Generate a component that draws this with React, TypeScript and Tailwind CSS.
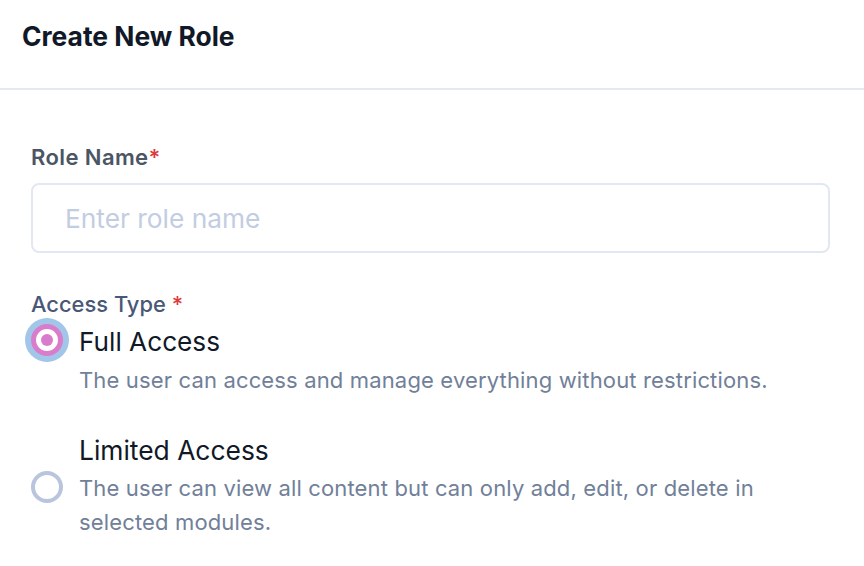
import React from "react";

export default function App() {
  return (
    <div className="w-[864px] h-[566px] bg-white overflow-hidden" style={{ fontFamily: "Inter, 'Noto Sans', sans-serif" }}>
      <div className="h-[90px] border-b-2 border-[#e3eaf3] px-[22px] pt-[20px]">
        <h1 className="text-[26.4px] leading-[32px] font-bold text-[#111827]">Create New Role</h1>
      </div>
      <div className="px-[31px] pr-[34px] pt-[53px]">
        <label className="block text-[22px] leading-[28px] font-semibold tracking-[0.4px] text-[#4b5563]">
          Role Name<span className="text-[#dc3c3c]">*</span>
        </label>
        <input
          className="mt-[12px] block w-full h-[70px] rounded-[8px] border-2 border-[#e1e8f4] px-[32px] text-[26.3px] text-[#111827] placeholder:text-[#c2cde2] outline-none"
          placeholder="Enter role name"
        />
        <div className="mt-[37px] text-[21.9px] leading-[28px] font-medium text-[#4a5878]">
          Access Type <span className="text-[#dc3c3c]">*</span>
        </div>
        <div className="mt-[8px] flex items-start">
          <div className="w-[32px] h-[32px] mt-[-2px] shrink-0 rounded-full border-[5px] border-[#d97ccb] ring-[6px] ring-[#a2c6ea] flex items-center justify-center bg-white">
            <div className="w-[12px] h-[12px] rounded-full bg-[#d97ccb]" />
          </div>
          <div className="ml-[16px]">
            <div className="text-[26.2px] leading-[32px] text-[#111827]">Full Access</div>
            <div className="mt-[5px] text-[22px] leading-[34px] tracking-[0.15px] text-[#718099]">
              The user can access and manage everything without restrictions.
            </div>
          </div>
        </div>
        <div className="mt-[37px] flex items-center">
          <div className="w-[32px] h-[32px] shrink-0 rounded-full border-[4px] border-[#b9c5dd] bg-white" />
          <div className="ml-[16px] w-[710px]">
            <div className="text-[26.4px] leading-[32px] text-[#111827]">Limited Access</div>
            <div className="mt-[5px] text-[22px] leading-[34px] tracking-[0.15px] text-[#718099]">
              The user can view all content but can only add, edit, or delete in selected modules.
            </div>
          </div>
        </div>
      </div>
    </div>
  );
}
